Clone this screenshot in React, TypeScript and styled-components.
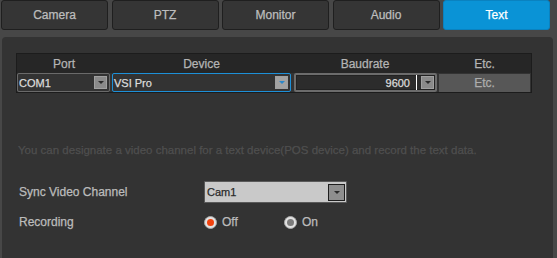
import React, { useState } from "react";
import styled, { createGlobalStyle } from "styled-components";

const GlobalStyle = createGlobalStyle`
  body {
    margin: 0;
    background: #474747;
    font-family: "Liberation Sans", Arial, sans-serif;
    -webkit-text-stroke: 0.25px currentColor;
  }
`;

const Page = styled.div`
  width: 557px;
  height: 258px;
  overflow: hidden;
  background: #474747;
`;

const TabBar = styled.div`
  display: flex;
  gap: 3.5px;
  padding-left: 1px;
  height: 30px;
`;

const Tab = styled.div<{ $active?: boolean }>`
  width: 107px;
  height: 30px;
  box-sizing: border-box;
  display: flex;
  align-items: center;
  justify-content: center;
  background: ${(p) => (p.$active ? "#0a93d6" : "#353535")};
  border: 1px solid ${(p) => (p.$active ? "#0a82c0" : "#1f1f1f")};
  border-radius: 3px;
  color: ${(p) => (p.$active ? "#ffffff" : "#bdbdbd")};
  font-size: 12px;
  cursor: pointer;
`;

const Panel = styled.div`
  margin: 7px 0 0 2px;
  width: 551px;
  height: 221px;
  box-sizing: border-box;
  background: #333333;
  border-radius: 4px 4px 0 0;
  padding: 16px 0 0 14px;
`;

const Table = styled.div`
  width: 516px;
  box-sizing: border-box;
  border: 1px solid #1c1c1c;
  display: grid;
  grid-template-columns: 94px 181px 146px 93px;
`;

const HeadCell = styled.div`
  height: 19px;
  background: #262626;
  color: #b4b4b4;
  font-size: 12px;
  display: flex;
  align-items: center;
  justify-content: center;
`;

const Cell = styled.div`
  height: 19px;
  display: flex;
  align-items: stretch;
`;

const Select = styled.div<{ $focus?: boolean }>`
  flex: 1;
  box-sizing: border-box;
  margin: 0 1px 0 ${(p) => (p.$focus ? "1px" : "0")};
  border: 1px solid ${(p) => (p.$focus ? "#1d90d8" : "#6a6a6a")};
  border-radius: 2px;
  display: flex;
  align-items: center;
  color: #dcdcdc;
  font-size: 11px;
  padding: 0 2px 0 1px;
`;

const Value = styled.span<{ $right?: boolean }>`
  flex: 1;
  text-align: ${(p) => (p.$right ? "right" : "left")};
`;

const RateSelect = styled.div`
  flex: 1;
  box-sizing: border-box;
  margin: 0 1px 0 2px;
  border: 2px solid #6c6c6c;
  border-radius: 2px;
  box-shadow: inset 0 0 0 1px #222;
  background: #2c2c2c;
  display: flex;
  align-items: center;
  color: #dcdcdc;
  font-size: 11px;
  padding: 0 1px 0 4px;
`;

const Caret = styled.span`
  width: 1px;
  height: 15px;
  background: #ffffff;
  margin: 0 4px 0 6px;
`;

const DropButton = styled.span<{ $tone?: "dark" | "light" | "big" }>`
  width: ${(p) => (p.$tone === "big" ? "17px" : "13px")};
  height: ${(p) => (p.$tone === "big" ? "17px" : "13px")};
  box-sizing: border-box;
  background: ${(p) => (p.$tone === "light" ? "#a2a2a2" : p.$tone === "big" ? "#8e8e8e" : "#8a8a8a")};
  border: 1px solid ${(p) => (p.$tone === "big" ? "#1e1e1e" : "#a0a0a0")};
  display: flex;
  align-items: center;
  justify-content: center;
  &::after {
    content: "";
    border-left: 3px solid transparent;
    border-right: 3px solid transparent;
    border-top: 3px solid ${(p) => (p.$tone === "light" ? "#2a86c8" : "#2b2b2b")};
  }
`;

const EtcCell = styled.div`
  flex: 1;
  margin: 1px 1px 0 1px;
  background: #575757;
  color: #adadad;
  font-size: 12px;
  display: flex;
  align-items: center;
  justify-content: center;
`;

const Note = styled.div`
  margin: 51px 0 0 2px;
  color: #4f4f4f;
  font-size: 11.5px;
  line-height: 13px;
`;

const FormRow = styled.div<{ $gap: number }>`
  display: grid;
  grid-template-columns: 185px auto;
  align-items: center;
  margin: ${(p) => p.$gap}px 0 0 3px;
  color: #bcbcbc;
  font-size: 12px;
`;

const ChannelSelect = styled.div`
  width: 143px;
  height: 22px;
  box-sizing: border-box;
  background: #c9c9c9;
  border: 1px solid #5a5a5a;
  border-radius: 1px;
  display: flex;
  align-items: center;
  padding: 0 1px 0 2px;
  color: #2a2a2a;
  font-size: 11px;
`;

const RadioGroup = styled.div`
  display: flex;
  align-items: center;
`;

const RadioLabel = styled.label`
  width: 80px;
  display: flex;
  align-items: center;
  gap: 5px;
  cursor: pointer;
`;

const Dot = styled.span<{ $on: boolean }>`
  width: 13px;
  height: 13px;
  box-sizing: border-box;
  border-radius: 50%;
  background: #e2e2e2;
  border: 1px solid #a8a8a8;
  display: flex;
  align-items: center;
  justify-content: center;
  &::after {
    content: "";
    width: 7px;
    height: 7px;
    border-radius: 50%;
    background: ${(p) => (p.$on ? "#f2420e" : "#7c7c7c")};
  }
`;

const tabs = ["Camera", "PTZ", "Monitor", "Audio", "Text"];

export default function App() {
  const [recording, setRecording] = useState("Off");

  return (
    <Page>
      <GlobalStyle />
      <TabBar>
        {tabs.map((t) => (
          <Tab key={t} $active={t === "Text"}>
            {t}
          </Tab>
        ))}
      </TabBar>
      <Panel>
        <Table>
          <HeadCell>Port</HeadCell>
          <HeadCell>Device</HeadCell>
          <HeadCell>Baudrate</HeadCell>
          <HeadCell>Etc.</HeadCell>
          <Cell>
            <Select>
              <Value>COM1</Value>
              <DropButton $tone="dark" />
            </Select>
          </Cell>
          <Cell>
            <Select $focus>
              <Value>VSI Pro</Value>
              <DropButton $tone="light" />
            </Select>
          </Cell>
          <Cell>
            <RateSelect>
              <Value $right>9600</Value>
              <Caret />
              <DropButton $tone="dark" />
            </RateSelect>
          </Cell>
          <Cell>
            <EtcCell>Etc.</EtcCell>
          </Cell>
        </Table>
        <Note>
          You can designate a video channel for a text device(POS device) and
          record the text data.
        </Note>
        <FormRow $gap={24}>
          <span>Sync Video Channel</span>
          <ChannelSelect>
            <Value>Cam1</Value>
            <DropButton $tone="big" />
          </ChannelSelect>
        </FormRow>
        <FormRow $gap={12}>
          <span>Recording</span>
          <RadioGroup>
            {["Off", "On"].map((opt) => (
              <RadioLabel key={opt} onClick={() => setRecording(opt)}>
                <Dot $on={recording === opt && opt === "Off"} />
                {opt}
              </RadioLabel>
            ))}
          </RadioGroup>
        </FormRow>
      </Panel>
    </Page>
  );
}
